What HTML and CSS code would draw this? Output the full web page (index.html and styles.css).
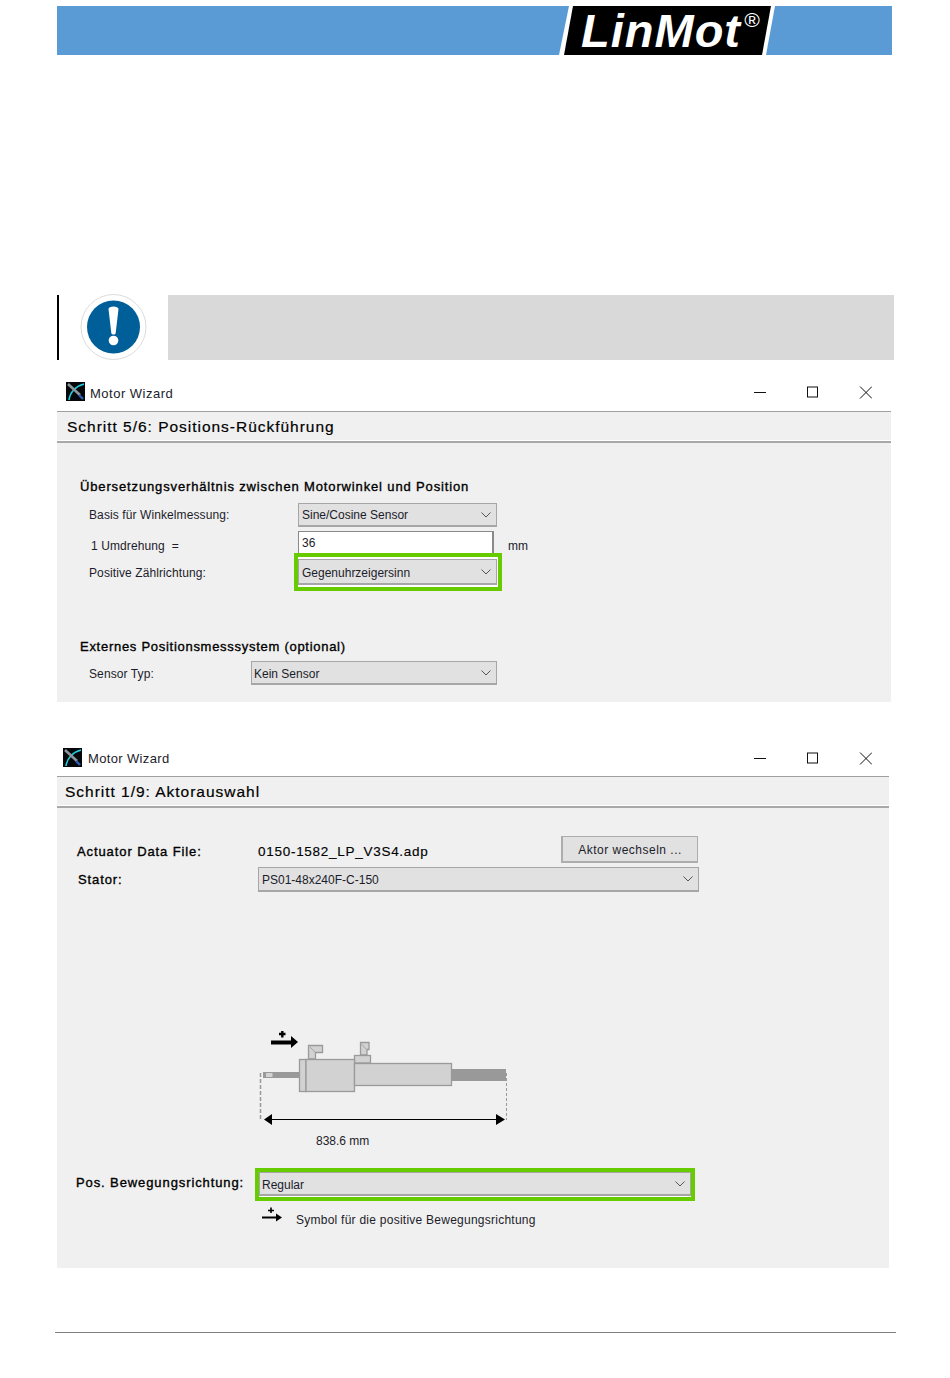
FILE: index.html
```html
<!DOCTYPE html>
<html lang="de">
<head>
<meta charset="utf-8">
<title>LinMot Motor Wizard</title>
<link rel="stylesheet" href="styles.css">
</head>
<body>
<div class="page">
  <header class="banner">
    <svg class="logo" width="217" height="49" viewBox="0 0 217 49">
      <polygon points="10,0 216,0 207,49 0,49" fill="#fff"/>
      <polygon points="14,0 212,0 203,49 5,49" fill="#000"/>
      <text x="22" y="41" class="logo-word">LinMot</text>
      <text x="185" y="21" class="logo-reg">®</text>
    </svg>
  </header>

  <section class="note">
    <div class="note-icon">
      <svg width="68" height="68" viewBox="0 0 68 68">
        <circle cx="34.500" cy="34" r="32.500" fill="#fff" stroke="#dcdcdc" stroke-width="1"/>
        <circle cx="34.500" cy="34" r="26.500" fill="#005f99"/>
        <path d="M29.500 16 C29.500 12.500 39.500 12.500 39.500 16 L36.700 40 C36.500 42 32.500 42 32.300 40 Z" fill="#fff"/>
        <circle cx="34.500" cy="47.500" r="4.800" fill="#fff"/>
      </svg>
    </div>
    <div class="note-body"></div>
  </section>

  <section class="window win-one">
    <div class="titlebar">
      <svg class="app-icon" viewBox="0 0 19 19">
        <rect width="19" height="19" fill="#05070a"/>
        <path d="M3 18 C4 10 10 4 18 2" fill="none" stroke="#1fd0e0" stroke-width="1.600"/>
        <path d="M2 2 L14 13" fill="none" stroke="#8b979c" stroke-width="2.600"/>
        <path d="M13 13 L17 17" fill="none" stroke="#2e5fb0" stroke-width="2.400"/>
      </svg>
      <span class="title-text">Motor Wizard</span>
      <span class="win-controls">
        <svg width="118" height="13" viewBox="0 0 118 13" fill="none" stroke="#111" stroke-width="1">
          <path d="M0 6.500H12"/>
          <rect x="53.500" y="1" width="10" height="10"/>
          <path d="M106 .5 L118 12.500 M118 .5 L106 12.500"/>
        </svg>
      </span>
    </div>
    <div class="step-band"><h2 class="step-title">Schritt 5/6: Positions-Rückführung</h2></div>
    <div class="content content-one">
      <h3 class="group-title">Übersetzungsverhältnis zwischen Motorwinkel und Position</h3>
      <div class="row row-basis">
        <span class="label label-wide">Basis für Winkelmessung:</span>
        <div class="select select-mid"><span>Sine/Cosine Sensor</span>
          <svg class="chev" viewBox="0 0 10 6"><path d="M.5 .5 L5 5 L9.500 .5"/></svg></div>
      </div>
      <div class="row row-turn">
        <span class="label label-wide label-low">1 Umdrehung &nbsp;=</span>
        <div class="input">36</div>
        <span class="unit">mm</span>
      </div>
      <div class="row row-dir">
        <span class="label label-wide label-nudge">Positive Zählrichtung:</span>
        <div class="mark mark-one">
          <div class="select select-mid text-nudge"><span>Gegenuhrzeigersinn</span>
            <svg class="chev" viewBox="0 0 10 6"><path d="M.5 .5 L5 5 L9.500 .5"/></svg></div>
        </div>
      </div>
      <h3 class="group-title group-two">Externes Positionsmesssystem (optional)</h3>
      <div class="row row-sensor">
        <span class="label label-narrow label-drop">Sensor Typ:</span>
        <div class="select select-sensor text-drop"><span>Kein Sensor</span>
          <svg class="chev" viewBox="0 0 10 6"><path d="M.5 .5 L5 5 L9.500 .5"/></svg></div>
      </div>
    </div>
  </section>

  <section class="window win-two">
    <div class="titlebar">
      <svg class="app-icon" viewBox="0 0 19 19">
        <rect width="19" height="19" fill="#05070a"/>
        <path d="M3 18 C4 10 10 4 18 2" fill="none" stroke="#1fd0e0" stroke-width="1.600"/>
        <path d="M2 2 L14 13" fill="none" stroke="#8b979c" stroke-width="2.600"/>
        <path d="M13 13 L17 17" fill="none" stroke="#2e5fb0" stroke-width="2.400"/>
      </svg>
      <span class="title-text">Motor Wizard</span>
      <span class="win-controls">
        <svg width="118" height="13" viewBox="0 0 118 13" fill="none" stroke="#111" stroke-width="1">
          <path d="M0 6.500H12"/>
          <rect x="53.500" y="1" width="10" height="10"/>
          <path d="M106 .5 L118 12.500 M118 .5 L106 12.500"/>
        </svg>
      </span>
    </div>
    <div class="step-band"><h2 class="step-title">Schritt 1/9: Aktorauswahl</h2></div>
    <div class="content content-two">
      <div class="row row-file">
        <span class="strong-label label-file">Actuator Data File:</span>
        <span class="file-name">0150-1582_LP_V3S4.adp</span>
        <div class="button">Aktor wechseln ...</div>
      </div>
      <div class="row row-stator">
        <span class="strong-label label-stator">Stator:</span>
        <div class="select select-stator text-drop"><span>PS01-48x240F-C-150</span>
          <svg class="chev" viewBox="0 0 10 6"><path d="M.5 .5 L5 5 L9.500 .5"/></svg></div>
      </div>
      <div class="diagram">
        <svg width="252" height="125" viewBox="0 0 252 125">
          <path d="M13 17.500H33" stroke="#000" stroke-width="4"/>
          <path d="M33 11 L40 17 L33 23 Z" fill="#000"/>
          <path d="M21 9H27.500 M24.300 6V12.500" stroke="#000" stroke-width="2.400"/>
          <g fill="#d2d2d2" stroke="#9a9a9a" stroke-width="1.300">
            <path d="M50.500 34V20.500H64.500V27.500H57.500V34Z"/>
            <path d="M102.500 30V17.500H111V24.500H109V30Z"/>
            <rect x="96.500" y="30.500" width="16" height="7.500"/>
            <rect x="41.500" y="34.500" width="6.500" height="32"/>
            <rect x="48" y="34.500" width="48.500" height="32"/>
            <rect x="96.500" y="38.500" width="97" height="22"/>
          </g>
          <path d="M52 22 L57 27 M103.500 19 L108 24" stroke="#9a9a9a" stroke-width=".8" fill="none"/>
          <rect x="5" y="47" width="36" height="6" fill="#999"/>
          <rect x="8" y="48" width="6.500" height="4" fill="#d2d2d2"/>
          <rect x="194" y="44" width="54" height="12" fill="#999"/>
          <path d="M2.500 48V95" stroke="#999" stroke-width="1.500" stroke-dasharray="4 2" fill="none"/>
          <path d="M248.500 48V95" stroke="#999" stroke-width="1" stroke-dasharray="3 2" fill="none"/>
          <path d="M8 94.500H245" stroke="#000" stroke-width="1"/>
          <path d="M14 89 L6 94.500 L14 100 Z M238 89 L247 94.500 L238 100 Z" fill="#000"/>
          <text x="58" y="120" class="dim-text">838.6 mm</text>
        </svg>
      </div>
      <div class="row row-motion">
        <span class="strong-label label-motion">Pos. Bewegungsrichtung:</span>
        <div class="mark mark-two">
          <div class="select select-motion text-drop"><span>Regular</span>
            <svg class="chev" viewBox="0 0 10 6"><path d="M.5 .5 L5 5 L9.500 .5"/></svg></div>
        </div>
      </div>
      <div class="row row-symbol">
        <svg class="mini-arrow" width="22" height="16" viewBox="0 0 22 16">
          <path d="M1 10.500H16" stroke="#000" stroke-width="2"/>
          <path d="M15 6.500 L21 10.500 L15 14.500 Z" fill="#000"/>
          <path d="M7 3.500H13 M10 .5V6" stroke="#000" stroke-width="1.600"/>
        </svg>
        <span class="label label-symbol">Symbol für die positive Bewegungsrichtung</span>
      </div>
    </div>
  </section>

  <div class="rule"></div>
</div>
</body>
</html>
```

FILE: styles.css
```css
* { box-sizing: border-box; }
html, body { margin: 0; padding: 0; background: #fff; }
body {
  font-family: "Liberation Sans", Arial, sans-serif;
  color: #1c1c2a;
  overflow: hidden;
}
.page { width: 950px; height: 1378px; padding: 6px 0 0 57px; }

/* banner */
.banner { width: 835px; height: 49px; background: #5b9bd5; }
.logo { display: block; margin-left: 502px; overflow: visible; }
.logo-word { font: italic bold 47px "Liberation Sans", Arial, sans-serif; letter-spacing: 1px; fill: #fff; }
.logo-reg { font: italic 21px "Liberation Sans", Arial, sans-serif; fill: #fff; }

/* note */
.note { display: flex; width: 837px; height: 65px; margin-top: 240px; border-left: 2px solid #000; }
.note-icon { width: 109px; flex: none; padding: 0 0 0 20px; margin-top: -2px; }
.note-icon svg { display: block; }
.note-body { flex: 1; background: #d9d9d9; }

/* windows */
.window { background: #f0f0f0; }
.win-one { width: 834px; height: 324px; margin-top: 18px; }
.win-two { width: 832px; height: 525px; margin-top: 41px; }

.titlebar { height: 34px; background: #fff; display: flex; align-items: center; border-bottom: 1px solid #a0a0a0; }
.win-one .titlebar { padding: 0 19px 6px 9px; }
.win-two .titlebar { padding: 0 17px 4px 6px; }
.app-icon { width: 19px; height: 19px; flex: none; }
.title-text { font-size: 13px; margin-left: 5px; padding-top: 3px; color: #1c1c2a; letter-spacing: .5px; }
.win-two .title-text { padding-top: 2px; margin-left: 6px; letter-spacing: .35px; }
.win-controls { margin-left: auto; display: flex; padding-top: 1px; }
.win-controls svg { display: block; }

.step-band { height: 31px; background: #f0f0f0; border-bottom: 2px solid #a8a8a8; box-shadow: inset 0 -1px 0 #fff; display: flex; align-items: center; padding: 1px 0 0 10px; }
.win-two .step-band { padding-left: 8px; }
.step-title { margin: 0; font-size: 15.500px; font-weight: 400; color: #000; letter-spacing: .98px; -webkit-text-stroke: .2px #000; }

.content { display: flex; flex-direction: column; }
.content-one { padding: 36px 0 0 23px; }
.content-two { padding: 28px 0 0 0; }

.group-title { margin: 0; font-size: 13px; font-weight: 400; line-height: 15px; color: #000; letter-spacing: .86px; -webkit-text-stroke: .35px #000; }
.group-two { margin-top: 54px; letter-spacing: .72px; }

.row { display: flex; align-items: center; }
.label { font-size: 12px; color: #1c1c2a; letter-spacing: .1px; white-space: nowrap; }
.label-wide { width: 218px; flex: none; padding-left: 9px; }
.label-narrow { width: 171px; flex: none; padding-left: 9px; }
.label-low { padding-left: 11px; padding-top: 8px; }
.label-drop { padding-top: 2px; }
.label-nudge { padding-top: 2px; }
.label-symbol { padding-top: 10px; letter-spacing: .25px; }

.row-basis { height: 24px; margin-top: 9px; }
.row-turn { height: 23px; margin-top: 4px; align-items: flex-start; }
.row-dir { height: 26px; margin-top: 5px; }
.row-sensor { height: 24px; margin-top: 7px; }

.select { height: 100%; background: #e1e1e1; border: 1px solid #a6a6a6; border-bottom-width: 2px; display: flex; align-items: center; justify-content: space-between; padding: 0 5px 0 3px; font-size: 12px; color: #1c1c2a; }
.text-drop span, .text-nudge span { padding-top: 2px; }
.chev { width: 10px; height: 6px; flex: none; fill: none; stroke: #555; stroke-width: 1; }
.select-mid { width: 199px; height: 24px; }
.select-sensor { width: 246px; height: 24px; padding-left: 2px; }
.select-stator { width: 441px; height: 25px; padding-left: 3px; }
.select-motion { width: 432px; height: 24px; padding-left: 2px; }

.input { width: 196px; height: 23px; background: #fff; border: 1px solid #8a8a8a; border-right-width: 2px; border-bottom: 0; font-size: 12px; padding: 4px 0 0 3px; color: #1c1c2a; }
.unit { font-size: 12px; margin: 8px 0 0 14px; color: #1c1c2a; }

.mark { border: 4px solid #66cc00; background: #fff; flex: none; position: relative; }
.mark-one { width: 208px; height: 38px; padding: 2px 0 0 0; margin: -6px 0 -6px -4px; }
.mark-one .select { height: 26px; }
.mark-two { width: 440px; height: 33px; margin: -4px 0; }

/* window two rows */
.strong-label { font-size: 13px; color: #000; letter-spacing: .9px; -webkit-text-stroke: .35px #000; white-space: nowrap; }
.label-file { width: 201px; flex: none; padding: 4px 0 0 20px; }
.label-stator { width: 201px; flex: none; padding-left: 21px; }
.label-motion { width: 198px; flex: none; padding: 0 0 4px 19px; }
.file-name { font-size: 13.500px; color: #000; letter-spacing: .72px; width: 303px; flex: none; padding-top: 4px; -webkit-text-stroke: .15px #000; }
.row-file { height: 27px; }
.row-stator { height: 25px; margin-top: 4px; }
.button { width: 137px; height: 27px; background: #e1e1e1; border: 1px solid #adadad; border-bottom-width: 2px; border-left-width: 2px; font-size: 12px; letter-spacing: .5px; padding-top: 2px; display: flex; align-items: center; justify-content: center; color: #1c1c2a; }

.diagram { margin: 133px 0 0 201px; height: 125px; }
.diagram svg { display: block; }
.dim-text { font: 12px "Liberation Sans", Arial, sans-serif; fill: #1c1c2a; }

.row-motion { height: 25px; margin-top: 22px; }
.row-symbol { margin: 10px 0 0 204px; height: 16px; }
.mini-arrow { flex: none; margin-right: 13px; }

/* footer rule */
.rule { width: 841px; height: 1px; margin: 64px 0 0 -2px; background: #7f7f7f; }
```
